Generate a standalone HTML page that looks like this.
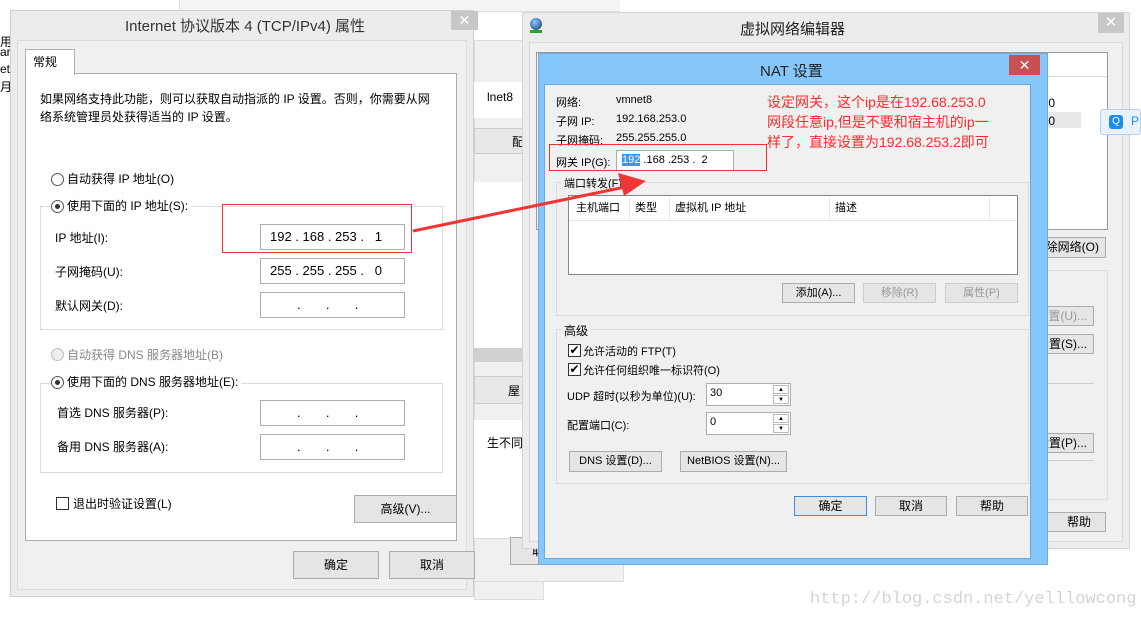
<!DOCTYPE html>
<html><head><meta charset="utf-8"><style>
*{box-sizing:border-box;margin:0;padding:0}
body{width:1141px;height:621px;background:#fff;position:relative;overflow:hidden;font-family:"Liberation Sans","Noto Sans CJK SC",sans-serif;font-size:12px;color:#000}
.a{position:absolute;white-space:nowrap}
.btn{position:absolute;background:#e5e5e5;border:1px solid #acacac;text-align:center;font-size:12px;white-space:nowrap}
.box{position:absolute;background:#fff;border:1px solid #abadb3;font-size:12px;white-space:nowrap}
.grp{position:absolute;border:1px solid #dcdcdc}
.rad{position:absolute;width:13px;height:13px;border:1px solid #555;border-radius:50%;background:#fff}
.chk{position:absolute;width:13px;height:13px;border:1px solid #333;background:#fff;font-size:12px;line-height:11px;text-align:center}
.red{color:#ff2a2a}
</style></head><body>
<div class="a" style="left:0;top:0;width:180px;height:100px;background:#fff;border-right:1px solid #ddd"></div>
<div class="a" style="left:0;top:33px;font-size:12px">用</div>
<div class="a" style="left:0;top:45px">ar</div>
<div class="a" style="left:0;top:62px">et</div>
<div class="a" style="left:0;top:78px">月</div>
<div class="a" style="left:180px;top:0;width:440px;height:12px;background:#f4f4f4;border-bottom:1px solid #ddd"></div>
<div class="a" style="left:474px;top:40px;width:70px;height:560px;background:#f0f0f0;border:1px solid #ddd"></div>
<div class="a" style="left:474px;top:82px;width:50px;height:36px;background:#fff"></div>
<div class="a" style="left:487px;top:90px">lnet8</div>
<div class="a" style="left:474px;top:128px;width:50px;height:26px;background:#e8e8e8;border:1px solid #ccc"></div>
<div class="a" style="left:512px;top:133px">配</div>
<div class="a" style="left:474px;top:182px;width:50px;height:170px;background:#fff"></div>
<div class="a" style="left:474px;top:348px;width:50px;height:14px;background:#d0d0d0"></div>
<div class="a" style="left:474px;top:376px;width:50px;height:28px;background:#e8e8e8;border:1px solid #ccc"></div>
<div class="a" style="left:508px;top:382px">屋</div>
<div class="a" style="left:474px;top:420px;width:50px;height:120px;background:#fff"></div>
<div class="a" style="left:487px;top:434px">生不同</div>
<div class="a" style="left:474px;top:538px;width:150px;height:44px;background:#f0f0f0;border:1px solid #ddd"></div>
<div class="btn" style="left:510px;top:537px;width:68px;height:28px;line-height:26px">取消</div>
<!-- right main window -->
<div class="a" style="left:522px;top:12px;width:608px;height:537px;background:#ececec;border:1px solid #d4d4d4"></div>
<div class="a" style="left:530px;top:18px;width:14px;height:16px;"><div style="width:12px;height:12px;border-radius:50%;background:radial-gradient(circle at 40% 35%,#8cf,#136)"></div><div style="width:12px;height:3px;background:#2a2"></div></div>
<div class="a" style="left:740px;top:18px;font-size:15px;color:#222">虚拟网络编辑器</div>
<div class="a" style="left:1098px;top:13px;width:26px;height:20px;background:#c7c7c7;color:#fff;text-align:center;font-size:15px;line-height:20px">✕</div>
<div class="a" style="left:529px;top:42px;width:594px;height:500px;border:1px solid #d9d9d9;background:#f0f0f0"></div>
<div class="a" style="left:536px;top:52px;width:572px;height:178px;background:#fff;border:1px solid #999"></div>
<div class="a" style="left:1047px;top:76px;width:60px;height:1px;background:#ddd"></div>
<div class="a" style="left:1047px;top:112px;width:34px;height:16px;background:#e8e8e8"></div>
<div class="a" style="left:1045px;top:96px">.0</div>
<div class="a" style="left:1045px;top:114px">.0</div>
<div class="btn" style="left:1030px;top:237px;width:76px;height:21px;line-height:19px;text-align:right;padding-right:6px">除网络(O)</div>
<div class="a" style="left:1040px;top:270px;width:68px;height:230px;border:1px solid #ddd"></div>
<div class="btn" style="left:1030px;top:306px;width:64px;height:20px;line-height:18px;color:#999;text-align:right;padding-right:6px">置(U)...</div>
<div class="btn" style="left:1030px;top:334px;width:64px;height:20px;line-height:18px;text-align:right;padding-right:6px">置(S)...</div>
<div class="a" style="left:1040px;top:383px;width:54px;height:1px;background:#ccc"></div>
<div class="btn" style="left:1030px;top:433px;width:64px;height:20px;line-height:18px;text-align:right;padding-right:6px">设置(P)...</div>
<div class="a" style="left:1040px;top:460px;width:54px;height:1px;background:#ccc"></div>
<div class="btn" style="left:1030px;top:512px;width:76px;height:20px;line-height:18px;text-align:right;padding-right:14px">帮助</div>
<div class="a" style="left:1100px;top:109px;width:41px;height:26px;background:#eaf2fb;border:1px solid #b8cfe8;border-radius:3px"><div style="position:absolute;left:8px;top:5px;width:14px;height:14px;background:#1a8ef0;border-radius:3px;color:#fff;font-size:10px;text-align:center;line-height:14px">Q</div><div style="position:absolute;left:30px;top:4px;color:#1a8ef0">P</div></div>
<!-- NAT dialog -->
<div class="a" style="left:538px;top:53px;width:510px;height:512px;background:#85c6fb;border:1px solid #6aaee8"></div>
<div class="a" style="left:760px;top:60px;font-size:15px;color:#222">NAT 设置</div>
<div class="a" style="left:1009px;top:55px;width:31px;height:20px;background:#c75050;color:#fff;text-align:center;line-height:20px;font-size:14px">✕</div>
<div class="a" style="left:544px;top:84px;width:487px;height:475px;background:#f0f0f0;border:1px solid #6aa8e0"></div>
<div class="a" style="left:556px;top:94px;font-size:11px">网络:</div><div class="a" style="left:616px;top:94px;font-size:11px">vmnet8</div>
<div class="a" style="left:556px;top:113px;font-size:11px">子网 IP:</div><div class="a" style="left:616px;top:113px;font-size:11px">192.168.253.0</div>
<div class="a" style="left:556px;top:132px;font-size:11px">子网掩码:</div><div class="a" style="left:616px;top:132px;font-size:11px">255.255.255.0</div>
<div class="a" style="left:556px;top:154px;font-size:11px">网关 IP(G):</div>
<div class="box" style="left:616px;top:150px;width:118px;height:21px;line-height:19px;padding-left:5px;font-size:11px"><span style="background:#3399ff;color:#fff">192</span> .168 .253 .&nbsp; 2</div>
<div class="a" style="left:549px;top:144px;width:218px;height:27px;border:1px solid #e33"></div>
<div class="a red" style="left:767px;top:92px;font-size:14px;line-height:20px;width:290px">设定网关，这个ip是在192.68.253.0<br>网段任意ip,但是不要和宿主机的ip一<br>样了，直接设置为192.68.253.2即可</div>
<div class="grp" style="left:556px;top:182px;width:473px;height:134px"></div>
<div class="a" style="left:562px;top:175px;background:#f0f0f0;padding:0 2px;font-size:11px">端口转发(F)</div>
<div class="box" style="left:568px;top:195px;width:450px;height:80px;border-color:#828790"></div>
<div class="a" style="left:569px;top:196px;width:448px;height:25px;border-bottom:1px solid #e5e5e5;font-size:11px;line-height:25px">
<span class="a" style="left:7px">主机端口</span><span class="a" style="left:66px">类型</span><span class="a" style="left:106px">虚拟机 IP 地址</span><span class="a" style="left:266px">描述</span>
<span class="a" style="left:60px;top:2px;width:1px;height:20px;background:#e5e5e5"></span><span class="a" style="left:100px;top:2px;width:1px;height:20px;background:#e5e5e5"></span><span class="a" style="left:260px;top:2px;width:1px;height:20px;background:#e5e5e5"></span><span class="a" style="left:420px;top:2px;width:1px;height:20px;background:#e5e5e5"></span></div>
<div class="btn" style="left:782px;top:283px;width:73px;height:20px;line-height:18px;font-size:11px">添加(A)...</div>
<div class="btn" style="left:863px;top:283px;width:73px;height:20px;line-height:18px;font-size:11px;color:#999;border-color:#ccc">移除(R)</div>
<div class="btn" style="left:945px;top:283px;width:73px;height:20px;line-height:18px;font-size:11px;color:#999;border-color:#ccc">属性(P)</div>
<div class="grp" style="left:556px;top:329px;width:473px;height:155px"></div>
<div class="a" style="left:562px;top:322px;background:#f0f0f0;padding:0 2px;font-size:12px">高级</div>
<div class="chk" style="left:568px;top:344px">✔</div><div class="a" style="left:583px;top:343px;font-size:11px">允许活动的 FTP(T)</div>
<div class="chk" style="left:568px;top:363px">✔</div><div class="a" style="left:583px;top:362px;font-size:11px">允许任何组织唯一标识符(O)</div>
<div class="a" style="left:567px;top:388px;font-size:11px">UDP 超时(以秒为单位)(U):</div>
<div class="box" style="left:706px;top:383px;width:85px;height:23px;padding-left:3px;line-height:18px;font-size:11px">30</div>
<div class="a" style="left:773px;top:385px;width:16px;height:9px;border:1px solid #bbb;font-size:6px;text-align:center;line-height:8px">▲</div>
<div class="a" style="left:773px;top:395px;width:16px;height:9px;border:1px solid #bbb;font-size:6px;text-align:center;line-height:8px">▼</div>
<div class="a" style="left:567px;top:417px;font-size:11px">配置端口(C):</div>
<div class="box" style="left:706px;top:412px;width:85px;height:23px;padding-left:3px;line-height:18px;font-size:11px">0</div>
<div class="a" style="left:773px;top:414px;width:16px;height:9px;border:1px solid #bbb;font-size:6px;text-align:center;line-height:8px">▲</div>
<div class="a" style="left:773px;top:424px;width:16px;height:9px;border:1px solid #bbb;font-size:6px;text-align:center;line-height:8px">▼</div>
<div class="btn" style="left:569px;top:451px;width:93px;height:21px;line-height:19px;font-size:11px">DNS 设置(D)...</div>
<div class="btn" style="left:680px;top:451px;width:107px;height:21px;line-height:19px;font-size:11px">NetBIOS 设置(N)...</div>
<div class="btn" style="left:794px;top:496px;width:73px;height:20px;line-height:18px;border-color:#3c8fe0">确定</div>
<div class="btn" style="left:875px;top:496px;width:72px;height:20px;line-height:18px">取消</div>
<div class="btn" style="left:956px;top:496px;width:72px;height:20px;line-height:18px">帮助</div>
<!-- left dialog -->
<div class="a" style="left:10px;top:10px;width:464px;height:587px;background:#ececec;border:1px solid #d0d0d0"></div>
<div class="a" style="left:125px;top:15px;font-size:15px;color:#333">Internet 协议版本 4 (TCP/IPv4) 属性</div>
<div class="a" style="left:451px;top:11px;width:27px;height:19px;background:#c7c7c7;color:#fff;text-align:center;line-height:19px;font-size:14px">✕</div>
<div class="a" style="left:17px;top:40px;width:450px;height:550px;border:1px solid #dcdcdc;background:#f0f0f0"></div>
<div class="a" style="left:25px;top:73px;width:432px;height:468px;background:#fff;border:1px solid #adadad"></div>
<div class="a" style="left:25px;top:49px;width:50px;height:26px;background:#fff;border:1px solid #adadad;border-bottom:none;padding:3px 7px">常规</div>
<div class="a" style="left:40px;top:90px;line-height:18px;font-size:12px">如果网络支持此功能，则可以获取自动指派的 IP 设置。否则，你需要从网<br>络系统管理员处获得适当的 IP 设置。</div>
<div class="rad" style="left:51px;top:173px"></div><div class="a" style="left:67px;top:170px">自动获得 IP 地址(O)</div>
<div class="grp" style="left:40px;top:206px;width:403px;height:124px"></div>
<div class="rad" style="left:51px;top:200px"><div style="width:5px;height:5px;background:#333;border-radius:50%;margin:3px"></div></div><div class="a" style="left:64px;top:197px;background:#fff;padding:0 3px">使用下面的 IP 地址(S):</div>
<div class="a" style="left:55px;top:229px">IP 地址(I):</div>
<div class="box" style="left:260px;top:224px;width:145px;height:26px;line-height:24px;padding-left:9px;font-size:13px">192 . 168 . 253 .&nbsp;&nbsp; 1</div>
<div class="a" style="left:55px;top:263px">子网掩码(U):</div>
<div class="box" style="left:260px;top:258px;width:145px;height:26px;line-height:24px;padding-left:9px;font-size:13px">255 . 255 . 255 .&nbsp;&nbsp; 0</div>
<div class="a" style="left:55px;top:297px">默认网关(D):</div>
<div class="box" style="left:260px;top:292px;width:145px;height:26px;line-height:24px;padding-left:36px;font-size:13px">.&nbsp;&nbsp;&nbsp;&nbsp;&nbsp;&nbsp;&nbsp;.&nbsp;&nbsp;&nbsp;&nbsp;&nbsp;&nbsp;&nbsp;.</div>
<div class="a" style="left:222px;top:204px;width:190px;height:49px;border:1px solid #e33"></div>
<div class="rad" style="left:51px;top:348px;background:#eee;border-color:#bbb"></div><div class="a" style="left:67px;top:346px;color:#888">自动获得 DNS 服务器地址(B)</div>
<div class="grp" style="left:40px;top:383px;width:403px;height:90px"></div>
<div class="rad" style="left:51px;top:376px"><div style="width:5px;height:5px;background:#333;border-radius:50%;margin:3px"></div></div><div class="a" style="left:64px;top:373px;background:#fff;padding:0 3px">使用下面的 DNS 服务器地址(E):</div>
<div class="a" style="left:57px;top:404px">首选 DNS 服务器(P):</div>
<div class="box" style="left:260px;top:400px;width:145px;height:26px;line-height:24px;padding-left:36px;font-size:13px">.&nbsp;&nbsp;&nbsp;&nbsp;&nbsp;&nbsp;&nbsp;.&nbsp;&nbsp;&nbsp;&nbsp;&nbsp;&nbsp;&nbsp;.</div>
<div class="a" style="left:57px;top:438px">备用 DNS 服务器(A):</div>
<div class="box" style="left:260px;top:434px;width:145px;height:26px;line-height:24px;padding-left:36px;font-size:13px">.&nbsp;&nbsp;&nbsp;&nbsp;&nbsp;&nbsp;&nbsp;.&nbsp;&nbsp;&nbsp;&nbsp;&nbsp;&nbsp;&nbsp;.</div>
<div class="chk" style="left:56px;top:497px;width:13px;height:13px"></div><div class="a" style="left:73px;top:495px">退出时验证设置(L)</div>
<div class="btn" style="left:354px;top:495px;width:103px;height:28px;line-height:26px">高级(V)...</div>
<div class="btn" style="left:293px;top:551px;width:86px;height:28px;line-height:26px">确定</div>
<div class="btn" style="left:389px;top:551px;width:86px;height:28px;line-height:26px">取消</div>
<svg class="a" style="left:0;top:0" width="1141" height="621"><line x1="413" y1="231" x2="630" y2="186" stroke="#f03535" stroke-width="3"/><polygon points="646,181 618,173 624,196" fill="#f03535"/></svg>
<div class="a" style="left:810px;top:590px;font-family:'Liberation Mono',monospace;font-size:17px;color:#d4d4d4">http://blog.csdn.net/yelllowcong</div>
</body></html>
